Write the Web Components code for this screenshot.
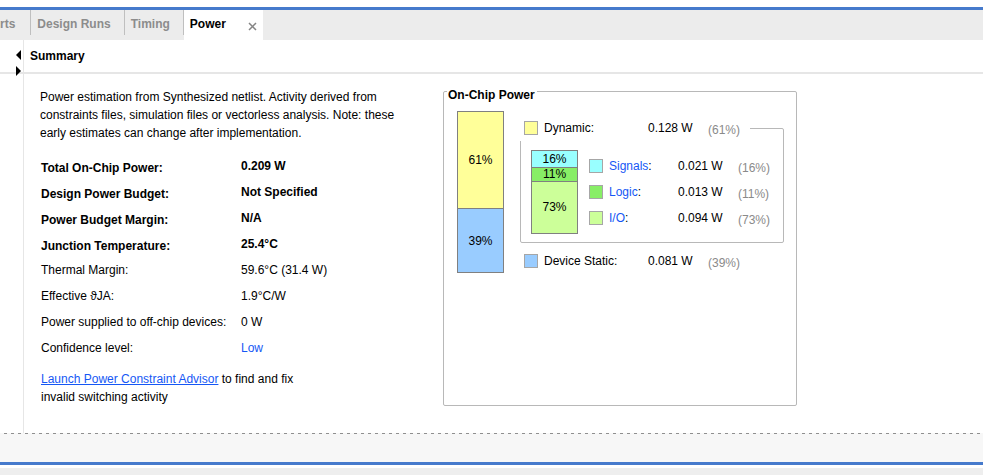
<!DOCTYPE html>
<html lang="en">
<head>
<meta charset="utf-8">
<title>Power</title>
<style>
:root{--accent:#467acc;--rule:#e6e6e6;--line:#b8b8b8;--link:#1557f5;--muted:#8a8a8a}
body{margin:0;background:#fff;color:#000;font:12px/18px "Liberation Sans",Arial,sans-serif}
</style>
</head>
<body>
<power-window></power-window>
<script>
const define = (name, html) => {
  const template = document.createElement('template');
  template.innerHTML = html;
  customElements.define(name, class extends HTMLElement {
    constructor() {
      super();
      this.attachShadow({mode: 'open'}).append(template.content.cloneNode(true));
    }
  });
};

define('panel-tab', `
<style>
:host{display:block;height:30px}
:host([active]){background:#fff}
.tab{display:flex;height:25px;border-right:1px solid #bfbfbf}
button{font:bold 12px/18px "Liberation Sans",Arial,sans-serif;color:#8c8c8c;background:none;border:0;margin:0;padding:5px 13px 2px 6px}
:host([cut]) button{padding:5px 15px 2px 0}
:host([active]) .tab{border:0}
:host([active]) button{color:#000}
</style>
<div class="tab"><button role="tab"><slot></slot></button><slot name="close"></slot></div>`);

define('tab-strip', `
<style>
:host{display:flex;background:#ececec;border-top:3px solid var(--accent)}
.close{display:flex;align-items:center;margin:0;padding:7px 6px 0 9px;border:0;background:none}
svg{display:block}
</style>
<panel-tab cut>rts</panel-tab><panel-tab>Design Runs</panel-tab><panel-tab>Timing</panel-tab>
<panel-tab active>Power<button class="close" slot="close" aria-label="Close tab"><svg width="9" height="9" viewBox="0 0 9 9"><path d="M1 1l7 7M8 1l-7 7" stroke="#858585" stroke-width="1.5"/></svg></button></panel-tab>`);

define('collapse-rail', `
<style>
:host{display:flex;flex-direction:column;align-items:flex-end;gap:6px;padding:10px 2px 0 0;border-right:1px solid var(--rule)}
button{display:block;border:0;padding:0;background:none;height:10px}
svg{display:block}
</style>
<button aria-label="Collapse left"><svg width="5" height="10" viewBox="0 0 5 10"><path d="M5 0v10L0 5z"/></svg></button>
<button aria-label="Expand right"><svg width="5" height="10" viewBox="0 0 5 10"><path d="M0 0v10L5 5z"/></svg></button>`);

define('power-facts', `
<style>
:host{display:block;padding:2px 0 0 0}
p{margin:0}
table{border-collapse:collapse;margin:11px 0 9px 1px}
th,td{height:26px;padding:0;text-align:left;font-weight:normal}
th{width:200px}
.strong th,.strong td{font-weight:bold}
.strong th{padding-top:4px;height:22px}
.low{color:var(--link)}
a{color:var(--link)}
.advice{margin-left:1px}
</style>
<p>Power estimation from Synthesized netlist. Activity derived from constraints files, simulation files or vectorless analysis. Note: these early estimates can change after implementation.</p>
<table>
<tbody class="strong">
<tr><th scope="row">Total On-Chip Power:</th><td>0.209 W</td></tr>
<tr><th scope="row">Design Power Budget:</th><td>Not Specified</td></tr>
<tr><th scope="row">Power Budget Margin:</th><td>N/A</td></tr>
<tr><th scope="row">Junction Temperature:</th><td>25.4°C</td></tr>
</tbody>
<tbody>
<tr><th scope="row">Thermal Margin:</th><td>59.6°C (31.4 W)</td></tr>
<tr><th scope="row">Effective ϑJA:</th><td>1.9°C/W</td></tr>
<tr><th scope="row">Power supplied to off-chip devices:</th><td>0 W</td></tr>
<tr><th scope="row">Confidence level:</th><td class="low">Low</td></tr>
</tbody>
</table>
<p class="advice"><a href="#advisor">Launch Power Constraint Advisor</a> to find and fix<br>invalid switching activity</p>`);

define('stack-bar', `
<style>
:host{display:grid;box-sizing:border-box;width:47px;gap:1px;background:#808080;border:1px solid #808080}
::slotted(div){display:flex;align-items:center;justify-content:center}
</style>
<slot></slot>`);

define('power-row', `
<style>
:host{display:grid;grid-template-columns:14px var(--label,98px) 54px auto;column-gap:6px;align-items:center;height:26px}
i{box-sizing:border-box;height:14px;background:var(--swatch);border:1px solid #a6a6a6}
.pct{color:var(--muted);padding-top:3px}
</style>
<i></i><slot name="label"></slot><slot name="value"></slot><span class="pct"><slot></slot></span>`);

define('chip-power', `
<style>
:host{display:grid}
fieldset{min-width:0;margin:0;border:1px solid var(--line);border-radius:2px}
.outer{padding:15px 12px 12px 13px}
.outer>legend{height:10px;font-weight:bold;margin-left:-10px;padding:0 2px 0 1px}
.body{display:grid;grid-template-columns:47px minmax(0,1fr);column-gap:16px;align-items:start}
.total{height:162px;grid-template-rows:96px 1fr}
.parts{padding-top:4px}
.inner{padding:9px 10px 8px}
.inner>legend{background:#fff;margin-left:-11px;padding:0 10px 0 4px}
.detail{display:grid;grid-template-columns:47px minmax(0,1fr);column-gap:11px}
.dynamic{height:84px;grid-template-rows:16px 13px 1fr;line-height:13px}
.rows{padding-top:3px;--label:63px}
.static{padding:5px 0 0 4px}
a{color:var(--link);text-decoration:none}
</style>
<fieldset class="outer"><legend>On-Chip Power</legend>
<div class="body">
<stack-bar class="total"><div style="background:#ffff99">61%</div><div style="background:#99ccff">39%</div></stack-bar>
<div class="parts">
<fieldset class="inner"><legend><power-row style="--swatch:#ffff99"><span slot="label">Dynamic:</span><span slot="value">0.128 W</span>(61%)</power-row></legend>
<div class="detail">
<stack-bar class="dynamic"><div style="background:#99ffff">16%</div><div style="background:#88ee66">11%</div><div style="background:#ccff99">73%</div></stack-bar>
<div class="rows">
<power-row style="--swatch:#99ffff"><span slot="label"><a href="#signals">Signals</a>:</span><span slot="value">0.021 W</span>(16%)</power-row>
<power-row style="--swatch:#88ee66"><span slot="label"><a href="#logic">Logic</a>:</span><span slot="value">0.013 W</span>(11%)</power-row>
<power-row style="--swatch:#ccff99"><span slot="label"><a href="#io">I/O</a>:</span><span slot="value">0.094 W</span>(73%)</power-row>
</div></div>
</fieldset>
<div class="static"><power-row style="--swatch:#99ccff"><span slot="label">Device Static:</span><span slot="value">0.081 W</span>(39%)</power-row></div>
</div></div>
</fieldset>`);

define('summary-panel', `
<style>
:host{display:grid;grid-template-columns:24px minmax(0,1fr);grid-template-rows:auto 1fr}
header{grid-area:1/1/2/3;padding:7px 0 7px 30px;border-bottom:2px solid var(--rule)}
h1{margin:0;font:bold 12px/18px "Liberation Sans",Arial,sans-serif}
collapse-rail{grid-area:1/1/3/2}
main{grid-area:2/2/3/3;display:grid;grid-template-columns:minmax(0,380px) minmax(0,354px);column-gap:23px;align-content:start;padding:12px 16px 27px}
</style>
<header><h1>Summary</h1></header>
<collapse-rail></collapse-rail>
<main><power-facts></power-facts><chip-power></chip-power></main>`);

define('bottom-strip', `
<style>
:host{display:block}
.dash{height:1px;background:repeating-linear-gradient(90deg,#f7f7f7 0 4px,#8f8f8f 4px 7px)}
.gap{height:28px;background:#f7f7f7;border-bottom:3px solid var(--accent)}
.foot{height:7px;margin-top:3px;background:#eee}
</style>
<div class="dash"></div><div class="gap"></div><div class="foot"></div>`);

define('power-window', `
<style>
:host{display:flex;flex-direction:column;box-sizing:border-box;min-height:100vh;padding-top:7px}
summary-panel{flex:1}
</style>
<tab-strip></tab-strip><summary-panel></summary-panel><bottom-strip></bottom-strip>`);
</script>
</body>
</html>
